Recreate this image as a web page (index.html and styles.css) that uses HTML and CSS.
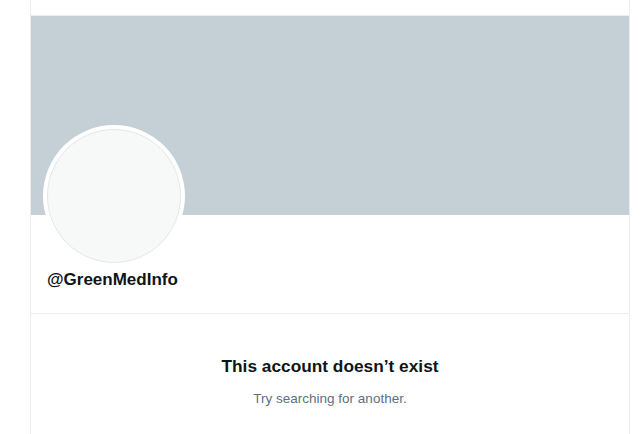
FILE: index.html
```html
<!DOCTYPE html>
<html>
<head>
<meta charset="utf-8">
<link rel="stylesheet" href="styles.css">
</head>
<body>
<div class="column">
  <div class="topbar"></div>
  <div class="banner"></div>
  <div class="profile">
    <div class="avatar"><div class="avatar-inner"></div></div>
    <div class="handle">@GreenMedInfo</div>
  </div>
  <div class="empty">
    <div class="empty-title">This account doesn’t exist</div>
    <div class="empty-sub">Try searching for another.</div>
  </div>
</div>
</body>
</html>
```
FILE: styles.css
```css
html, body {
  margin: 0;
  padding: 0;
  background: #ffffff;
  font-family: "Liberation Sans", Arial, sans-serif;
}
.column {
  margin-left: 30px;
  width: 598px;
  height: 434px;
  border-left: 1px solid #ebeef0;
  border-right: 1px solid #ebeef0;
}
.topbar {
  height: 15px;
  border-bottom: 1px solid #ebeef0;
}
.banner {
  height: 199px;
  background: #c4cfd6;
}
.profile {
  padding: 0 12px 23px;
  border-bottom: 1px solid #ebeef0;
}
.avatar {
  margin-top: -90px;
  width: 142px;
  height: 142px;
  box-sizing: border-box;
  padding: 4px;
  border-radius: 50%;
  background: #ffffff;
}
.avatar-inner {
  width: 134px;
  height: 134px;
  box-sizing: border-box;
  border-radius: 50%;
  border: 1px solid #e3e7ea;
  background: #f7f9f9;
}
.handle {
  margin-top: 3px;
  padding-left: 4px;
  font-size: 17px;
  line-height: 20px;
  font-weight: bold;
  color: #0f1419;
}
.empty {
  padding-top: 42px;
  text-align: center;
}
.empty-title {
  font-size: 17.3px;
  line-height: 20px;
  font-weight: bold;
  color: #0f1419;
}
.empty-sub {
  margin-top: 15px;
  font-size: 13.5px;
  line-height: 16px;
  color: #5b7083;
}
```
